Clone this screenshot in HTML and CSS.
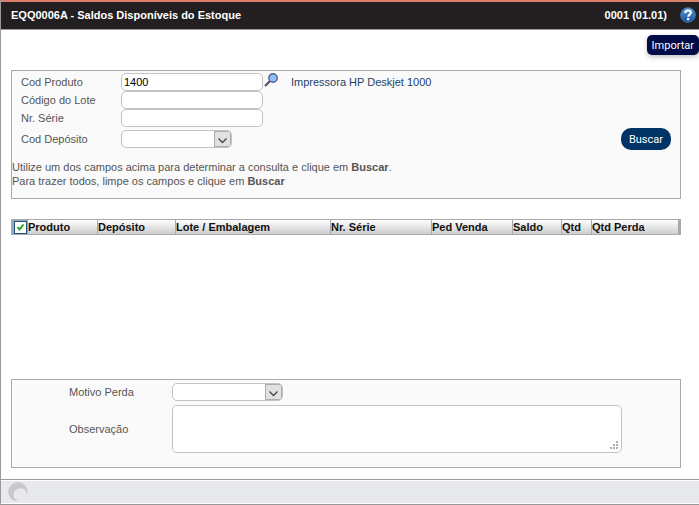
FILE: index.html
```
<!DOCTYPE html>
<html lang="pt-BR">
<head>
    <meta charset="UTF-8">
    <meta name="viewport" content="width=device-width, initial-scale=1.0">
    <title>EQQ0006A - Saldos Disponíveis do Estoque</title>
    <link rel="stylesheet" href="styles.css">
</head>
<body>

    <header class="header">
        <h1>EQQ0006A - Saldos Disponíveis do Estoque</h1>
        <span class="version">0001 (01.01)</span>
        <a class="help" href="#" aria-label="Ajuda">
            <svg width="16" height="16" viewBox="0 0 16 16">
                <defs>
                    <linearGradient id="helpFill" x1="0" y1="0" x2="0" y2="1">
                        <stop offset="0" stop-color="#5c9bd6"/>
                        <stop offset="1" stop-color="#174f9c"/>
                    </linearGradient>
                </defs>
                <circle cx="8" cy="8" r="7.3" fill="url(#helpFill)" stroke="#3f78b8" stroke-width="1"/>
                <path d="M5.2 6.1C5.3 4.3 6.4 3.5 8 3.5s2.8.9 2.8 2.3c0 1.8-2.6 1.9-2.6 4" fill="none" stroke="#fff" stroke-width="2"/>
                <rect x="7" y="11" width="2.3" height="2.2" fill="#fff"/>
            </svg>
        </a>
    </header>

    <div class="toolbar">
        <button type="button" class="btn-import">Importar</button>
    </div>

    <main class="content">
        <form class="panel search">
            <div class="search-body">
                <div class="fields">
                    <label for="produto">Cod Produto</label>
                    <div class="field">
                        <input type="text" id="produto" value="1400">
                        <button type="button" class="lookup" aria-label="Pesquisar produto">
                            <svg width="14" height="14" viewBox="0 0 14 14">
                                <path d="M1 13L6 8" stroke="#555" stroke-width="2.2"/>
                                <circle cx="9" cy="5" r="4.2" fill="#8fc0fa" stroke="#52618a" stroke-width="1.4"/>
                            </svg>
                        </button>
                        <span class="product-name">Impressora HP Deskjet 1000</span>
                    </div>

                    <label for="lote">Código do Lote</label>
                    <div class="field"><input type="text" id="lote"></div>

                    <label for="serie">Nr. Série</label>
                    <div class="field"><input type="text" id="serie"></div>

                    <label for="deposito" class="spaced">Cod Depósito</label>
                    <div class="field spaced">
                        <select id="deposito"><option value=""></option></select>
                    </div>
                </div>
                <button type="button" class="btn-search">Buscar</button>
            </div>
            <p class="hint">
                Utilize um dos campos acima para determinar a consulta e clique em <b>Buscar</b>.<br>
                Para trazer todos, limpe os campos e clique em <b>Buscar</b>
            </p>
        </form>

        <div class="results">
            <table>
                <colgroup>
                    <col class="col-check">
                    <col class="col-produto">
                    <col class="col-deposito">
                    <col class="col-lote">
                    <col class="col-serie">
                    <col class="col-pedido">
                    <col class="col-saldo">
                    <col class="col-qtd">
                    <col>
                </colgroup>
                <thead>
                    <tr>
                        <th class="check"><input type="checkbox" aria-label="Selecionar todos" checked></th>
                        <th>Produto</th>
                        <th>Depósito</th>
                        <th>Lote / Embalagem</th>
                        <th>Nr. Série</th>
                        <th>Ped Venda</th>
                        <th>Saldo</th>
                        <th>Qtd</th>
                        <th>Qtd Perda</th>
                    </tr>
                </thead>
            </table>
        </div>

        <form class="panel loss">
            <label for="motivo">Motivo Perda</label>
            <select id="motivo"><option value=""></option></select>
            <label for="observacao">Observação</label>
            <textarea id="observacao"></textarea>
        </form>
    </main>

    <footer class="statusbar">
        <div class="status">
            <svg width="20" height="20" viewBox="0 0 20 20">
                <path d="M19.5 8A9.7 9.7 0 1 0 11 19.5C5 18 4 10 8.500 7.500C13 4.500 18.500 7 18.500 12.500Q19.800 10.500 19.500 8Z" fill="#c9c9cb"/>
            </svg>
        </div>
    </footer>

</body>
</html>
```
FILE: styles.css
```
* {
    box-sizing: border-box;
}

body {
    display: flex;
    flex-direction: column;
    min-height: 100vh;
    margin: 0;
    border-left: 1px solid #999;
    background-color: #fff;
    color: #555;
    font-family: "Liberation Sans", Arial, sans-serif;
    font-size: 11px;
    line-height: 14px;
}

button, input, select, textarea {
    margin: 0;
    font-family: inherit;
    font-size: inherit;
}

/* Header */
.header {
    display: flex;
    align-items: center;
    height: 30px;
    padding: 0 3px 2px 10px;
    border-top: 2px solid #d9806a;
    border-bottom: 1px solid #999;
    background-color: #231f20;
    color: #fff;
    font-weight: bold;
}

.header h1 {
    flex: 1;
    margin: 0;
    font-size: 11px;
}

.help {
    display: flex;
    margin-left: 13px;
}

.toolbar {
    display: flex;
    justify-content: flex-end;
    padding-top: 5px;
}

.btn-import {
    height: 20px;
    padding: 0 5px;
    border: none;
    border-radius: 5px;
    background-color: #000b47;
    box-shadow: 0 2px 5px rgba(0, 0, 0, 0.25);
    color: #fff;
    font-family: Roboto, sans-serif;
    font-size: 11px;
    cursor: pointer;
}

.content {
    display: flex;
    flex: 1;
    flex-direction: column;
    padding: 15px 18px 10px 10px;
}

.panel {
    border: 1px solid #a7a9ac;
    background-color: #fafafa;
}

/* Search */
.search {
    padding: 2px 0 10px;
}

.search-body {
    display: flex;
    align-items: flex-end;
    justify-content: space-between;
    padding: 0 9px;
}

.fields {
    display: grid;
    grid-template-columns: 100px 1fr;
    align-items: center;
    padding-bottom: 2px;
}

.field {
    display: flex;
    align-items: center;
}

.spaced {
    margin-top: 3px;
}

input[type="text"], select, textarea {
    border: 1px solid #c3c3c3;
    border-radius: 5px;
    background-color: #fff;
    color: #000;
}

input[type="text"] {
    width: 142px;
    height: 18px;
    padding: 0 2px;
}

select {
    width: 111px;
    height: 18px;
    padding: 0 20px 0 4px;
    appearance: none;
    background: #fff url("data:image/svg+xml,%3Csvg xmlns='http://www.w3.org/2000/svg' width='17' height='16'%3E%3Crect x='.5' y='.5' width='16' height='15' fill='%23e1e1e1' stroke='%23adadad'/%3E%3Cpath d='M4.500 7.500l4 4 4-4' fill='none' stroke='%23444' stroke-width='1.300'/%3E%3C/svg%3E") no-repeat right center;
}

.lookup {
    display: flex;
    align-self: flex-start;
    margin-left: 1px;
    padding: 0;
    border: none;
    background: none;
    cursor: pointer;
}

.product-name {
    margin-left: 13px;
    color: #1f3f66;
}

.btn-search {
    height: 22px;
    padding: 0 8px;
    border: none;
    border-radius: 10px;
    background-color: #003366;
    color: #fff;
    font-family: Roboto, sans-serif;
    font-size: 11px;
    cursor: pointer;
}

.hint {
    margin: 10px 0 0;
}

/* Results */
.results {
    min-height: 180px;
    padding-top: 20px;
}

table {
    width: 100%;
    border: 1px solid #a7a9ac;
    border-right-width: 3px;
    border-collapse: separate;
    border-spacing: 0;
    table-layout: fixed;
}

thead tr {
    background: linear-gradient(#fff, #cdcdcd);
}

th {
    height: 14px;
    padding: 0;
    border-left: 1px solid #a7a9ac;
    color: #111;
    line-height: 14px;
    text-align: left;
    white-space: nowrap;
}

th.check, .check + th {
    border-left: none;
}

th.check {
    padding-left: 2px;
    background-color: #9aa8b4;
}

.check input {
    display: block;
    width: 13px;
    height: 13px;
    appearance: none;
    border: 1px solid #1d5180;
    background-color: #fff;
}

.check input:checked {
    background-image: url("data:image/svg+xml,%3Csvg xmlns='http://www.w3.org/2000/svg' width='11' height='11'%3E%3Cpath d='M2.500 5l2 2.500 4-5' fill='none' stroke='%2321a121' stroke-width='2'/%3E%3C/svg%3E");
}

.col-check { width: 16px; }
.col-produto { width: 69px; }
.col-deposito { width: 78px; }
.col-lote { width: 155px; }
.col-serie { width: 101px; }
.col-pedido { width: 81px; }
.col-saldo { width: 49px; }
.col-qtd { width: 30px; }

/* Loss */
.loss {
    display: grid;
    grid-template-columns: 103px 1fr;
    row-gap: 4px;
    align-items: center;
    padding: 3px 58px 14px 57px;
}

textarea {
    display: block;
    width: 100%;
    height: 48px;
    padding: 2px;
}

textarea::-webkit-resizer {
    background: url("data:image/svg+xml,%3Csvg xmlns='http://www.w3.org/2000/svg' width='8' height='8' fill='%23b0b0b0'%3E%3Cpath d='M6 0h2v2H6zM3 3h2v2H3zM6 3h2v2H6zM0 6h2v2H0zM3 6h2v2H3zM6 6h2v2H6z'/%3E%3C/svg%3E") no-repeat center;
}

/* Status bar */
.statusbar {
    padding: 1px 0;
    border-top: 1px solid #999;
    border-bottom: 1px solid #999;
}

.status {
    padding: 1px 7px;
    background-color: #e8e9ed;
}

.status svg {
    display: block;
}
```
